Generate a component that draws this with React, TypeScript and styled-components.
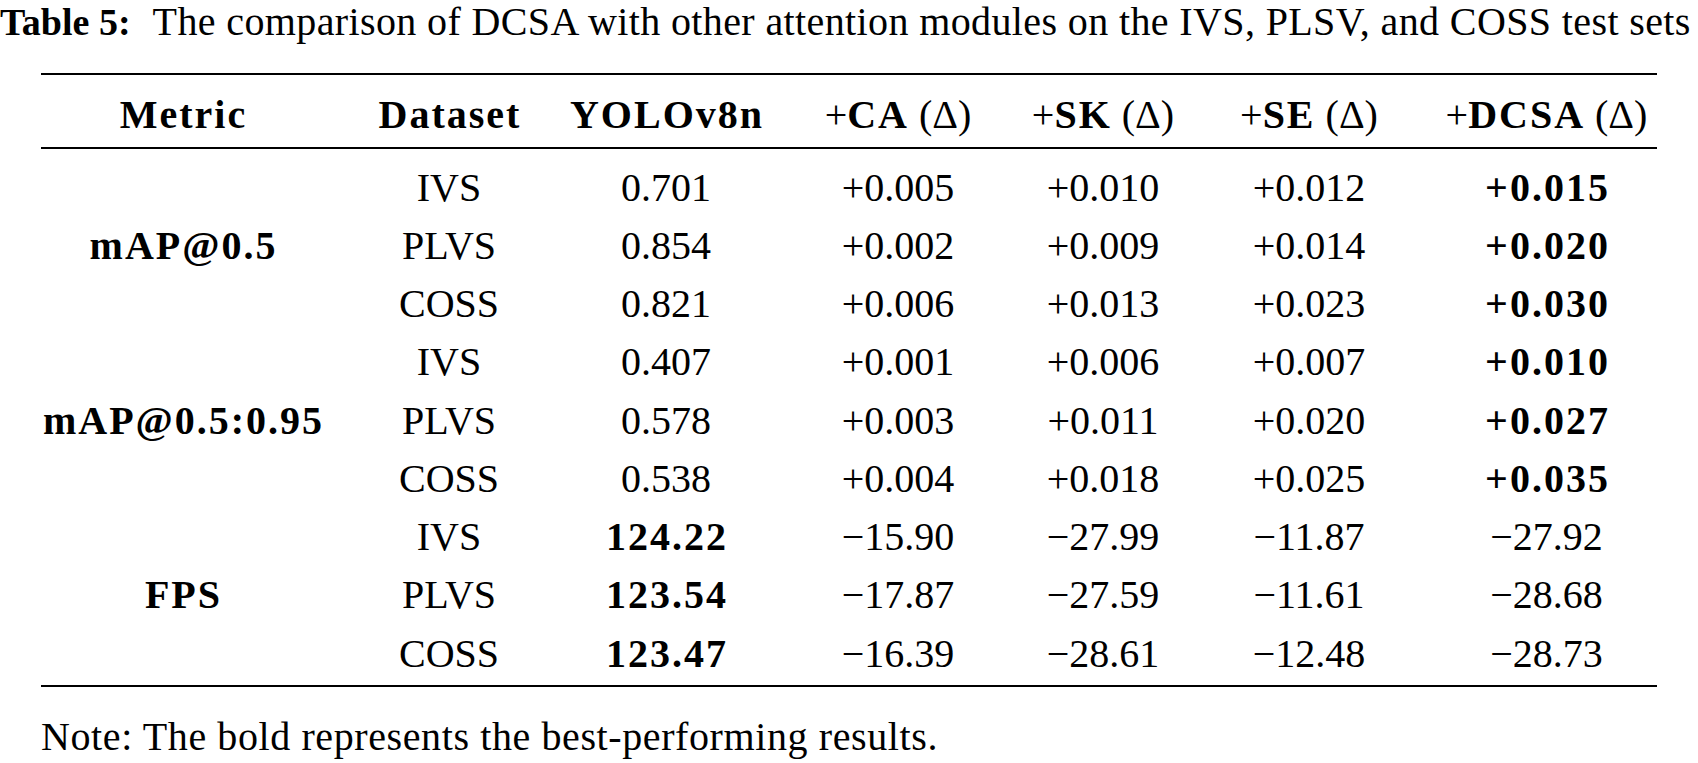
import React from "react"
import styled, { createGlobalStyle } from "styled-components"

const GlobalStyle = createGlobalStyle`
    html, body {
        margin: 0;
        padding: 0;
        background: #ffffff;
        overflow: hidden;
    }
    body {
        font-family: "Liberation Serif", "Times New Roman", serif;
        color: #000000;
    }
`;

// centre of each column taken from the figure
const COLUMNS = "283px 250px 184px 280px 130px 282px 193px";

export const Page = styled.div`
    width: 1698px;
    height: 763px;
    white-space: nowrap;
`;
export const Caption = styled.div`
    font-size: 40px;
    letter-spacing: 0.38px;
    line-height: 44px;
    height: 44px;
`;
export const CaptionLabel = styled.b`
    font-size: 38px;
    font-weight: 700;
    letter-spacing: 0;
    margin-right: 22px;
`;
export const TableFrame = styled.div`
    margin: 29px 0 0 41px;
    width: 1616px;
    border-top: 2px solid #000;
    border-bottom: 2px solid #000;
`;
export const HeadRow = styled.div`
    display: grid;
    grid-template-columns: ${COLUMNS};
    height: 66px;
    padding-top: 6px;
    align-items: center;
    border-bottom: 2px solid #000;
`;
export const Body = styled.div`
    display: grid;
    grid-template-columns: ${COLUMNS};
    grid-auto-rows: 58.25px;
    padding: 9px 0 3px;
`;
export const Cell = styled.div<{ $bold?: boolean; $span?: number }>`
    display: flex;
    justify-content: center;
    align-items: center;
    font-size: 40px;
    font-weight: ${(p) => (p.$bold ? 700 : 400)};
    letter-spacing: ${(p) => (p.$bold ? "2px" : "0")};
    padding-left: ${(p) => (p.$bold ? "2px" : "0")};
    ${(p) => (p.$span ? `grid-column: 1; grid-row: span ${p.$span};` : "")}
`;
export const Strong = styled.b`
    font-weight: 700;
    letter-spacing: 2px;
`;
export const Note = styled.div`
    margin: 28px 0 0 41px;
    font-size: 40px;
    letter-spacing: 0.6px;
    line-height: 44px;
`;

type Row = {
    dataset: string
    base: string
    baseBold?: boolean
    ca: string
    sk: string
    se: string
    dcsa: string
    dcsaBold?: boolean
}

type Group = { metric: string; rows: Row[] }

const groups: Group[] = [
    {
        metric: "mAP@0.5",
        rows: [
            { dataset: "IVS", base: "0.701", ca: "+0.005", sk: "+0.010", se: "+0.012", dcsa: "+0.015", dcsaBold: true },
            { dataset: "PLVS", base: "0.854", ca: "+0.002", sk: "+0.009", se: "+0.014", dcsa: "+0.020", dcsaBold: true },
            { dataset: "COSS", base: "0.821", ca: "+0.006", sk: "+0.013", se: "+0.023", dcsa: "+0.030", dcsaBold: true },
        ],
    },
    {
        metric: "mAP@0.5:0.95",
        rows: [
            { dataset: "IVS", base: "0.407", ca: "+0.001", sk: "+0.006", se: "+0.007", dcsa: "+0.010", dcsaBold: true },
            { dataset: "PLVS", base: "0.578", ca: "+0.003", sk: "+0.011", se: "+0.020", dcsa: "+0.027", dcsaBold: true },
            { dataset: "COSS", base: "0.538", ca: "+0.004", sk: "+0.018", se: "+0.025", dcsa: "+0.035", dcsaBold: true },
        ],
    },
    {
        metric: "FPS",
        rows: [
            { dataset: "IVS", base: "124.22", baseBold: true, ca: "\u221215.90", sk: "\u221227.99", se: "\u221211.87", dcsa: "\u221227.92" },
            { dataset: "PLVS", base: "123.54", baseBold: true, ca: "\u221217.87", sk: "\u221227.59", se: "\u221211.61", dcsa: "\u221228.68" },
            { dataset: "COSS", base: "123.47", baseBold: true, ca: "\u221216.39", sk: "\u221228.61", se: "\u221212.48", dcsa: "\u221228.73" },
        ],
    },
]

const modules = ["CA", "SK", "SE", "DCSA"]

const App = () => {
    return (
        <Page>
            <GlobalStyle />
            <Caption>
                <CaptionLabel>Table 5:</CaptionLabel>
                The comparison of DCSA with other attention modules on the IVS, PLSV, and COSS test sets
            </Caption>
            <TableFrame>
                <HeadRow>
                    <Cell $bold>Metric</Cell>
                    <Cell $bold>Dataset</Cell>
                    <Cell $bold>YOLOv8n</Cell>
                    {modules.map((m) => (
                        <Cell key={m}>
                            +<Strong>{m}</Strong>&nbsp;(Δ)
                        </Cell>
                    ))}
                </HeadRow>
                <Body>
                    {groups.map((g) => (
                        <React.Fragment key={g.metric}>
                            <Cell $bold $span={3}>{g.metric}</Cell>
                            {g.rows.map((r, i) => (
                                <React.Fragment key={i}>
                                    <Cell>{r.dataset}</Cell>
                                    <Cell $bold={r.baseBold}>{r.base}</Cell>
                                    <Cell>{r.ca}</Cell>
                                    <Cell>{r.sk}</Cell>
                                    <Cell>{r.se}</Cell>
                                    <Cell $bold={r.dcsaBold}>{r.dcsa}</Cell>
                                </React.Fragment>
                            ))}
                        </React.Fragment>
                    ))}
                </Body>
            </TableFrame>
            <Note>Note: The bold represents the best-performing results.</Note>
        </Page>
    )
}

export default App
